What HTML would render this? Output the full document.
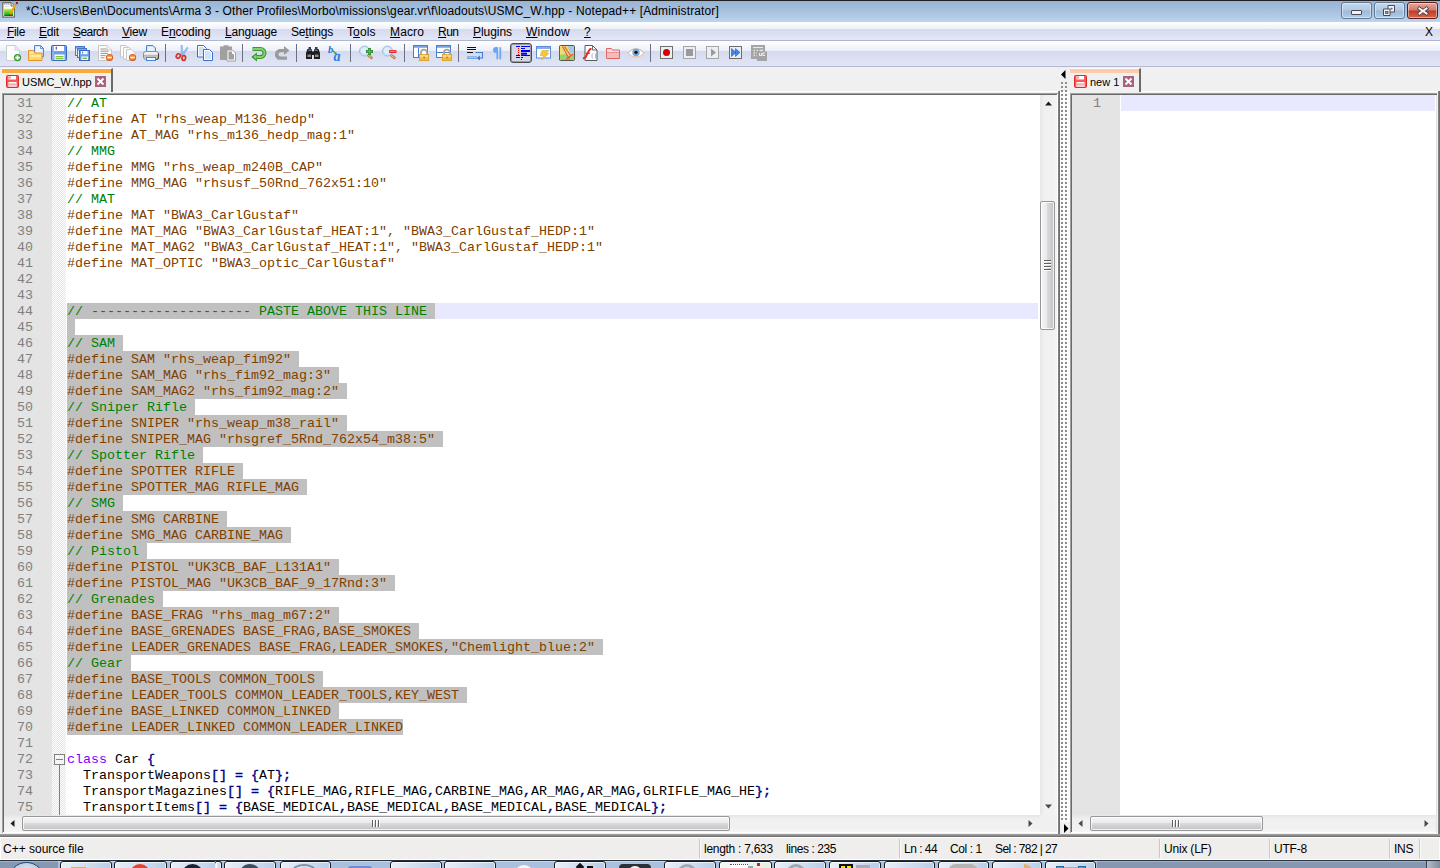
<!DOCTYPE html>
<html lang="en">
<head>
<meta charset="utf-8">
<title>Notepad++</title>
<style>
html,body{margin:0;padding:0;}
body{width:1440px;height:868px;overflow:hidden;position:relative;background:#f0f0f0;font-family:"Liberation Sans",sans-serif;font-size:12px;color:#000;}
div,span,i,b,u{box-sizing:border-box;}
.abs{position:absolute;}
/* ---------- title bar ---------- */
#topline{left:0;top:0;width:1440px;height:1px;background:#1f1f1f;}
#title{left:0;top:1px;width:1440px;height:21px;background:linear-gradient(#98b3d5 0%,#a6c0de 45%,#bed4ed 100%);}
#title .txt{left:26px;top:2px;font-size:12px;line-height:16px;white-space:nowrap;letter-spacing:.116px;}
.cap{top:1px;width:31px;height:17px;border:1px solid #5f7894;border-radius:3px;background:linear-gradient(#c4d6ea 0%,#b3cae4 48%,#9dbad9 52%,#b2cbe6 100%);box-shadow:inset 0 0 0 1px rgba(255,255,255,.45);}
#cclose{border-color:#5a1d1c;background:linear-gradient(#e4a79b 0%,#d4786a 48%,#c03a22 52%,#d1694d 100%);}
/* ---------- menu ---------- */
#menu{left:0;top:22px;width:1440px;height:19px;background:linear-gradient(#ffffff 0%,#eef1fa 38%,#d6daee 39%,#e3e8f6 100%);border-bottom:1px solid #b2b6ce;}
#menu span{position:absolute;top:2px;font-size:12px;line-height:16px;white-space:nowrap;}
#menu u{text-decoration:underline;}
/* ---------- toolbar ---------- */
#tool{left:0;top:41px;width:1440px;height:26px;background:linear-gradient(#ffffff 0%,#ebeff9 39%,#d4d9ee 40%,#e1e6f6 100%);border-bottom:1px solid #b6b7d2;}
.sep{position:absolute;top:3px;width:1px;height:18px;background:#6b6f7e;}
.ic{position:absolute;top:4px;width:16px;height:16px;overflow:visible;}
/* ---------- tabs ---------- */
.tab{top:68px;height:24px;background:#f0f0f0;border-right:2px solid #6a6a6a;border-top:1px solid #fbfbfb;}
.tab .bar{position:absolute;left:0;top:0;right:0;height:4px;}
.tab .lbl{position:absolute;top:6px;font-size:11px;line-height:14px;white-space:nowrap;}
/* ---------- status/taskbar ---------- */
.ssep{position:absolute;top:1px;width:2px;height:19px;border-left:1px solid #cdc8c8;background:#f8f6f6;}
.tb{position:absolute;top:0;height:12px;border:1px solid #141a22;border-radius:3px 3px 0 0;background:linear-gradient(90deg,#e9eff8 0%,#d3e0f1 45%,#b9cde8 100%);box-shadow:inset 0 0 0 1px rgba(255,255,255,.7);}
.tb.act{background:linear-gradient(90deg,#f2f8f2 0%,#e4f0e4 100%);}
/* ---------- scrollbars ---------- */
.vsb{width:17px;background:linear-gradient(90deg,#e6e6e6 0,#f0f0f0 4px,#f1f1f1 13px,#f6f6f6 100%);}
.hsb{height:17px;background:linear-gradient(#e6e6e6 0,#f0f0f0 4px,#f1f1f1 13px,#f6f6f6 100%);}
.vth{width:15px;border:1px solid #979797;border-radius:2px;background:linear-gradient(90deg,#f6f6f6 0%,#eaeaec 46%,#d8d9dc 50%,#c2c3c8 100%);box-shadow:inset 0 0 0 1px rgba(255,255,255,.75);}
.vth i{position:absolute;left:3px;width:7px;height:2px;background:#606060;border-bottom:1px solid #fff;}
.hth{height:15px;border:1px solid #979797;border-radius:2px;background:linear-gradient(#f6f6f6 0%,#eaeaec 46%,#d8d9dc 50%,#c2c3c8 100%);box-shadow:inset 0 0 0 1px rgba(255,255,255,.75);}
.hth i{position:absolute;top:3px;height:7px;width:2px;background:#606060;border-right:1px solid #fff;}
/* ---------- editors ---------- */
.ed{background:#fff;overflow:hidden;}
.code{position:absolute;left:0;top:0;font-family:"Liberation Mono",monospace;font-size:13.333px;line-height:16px;color:#000;}
.ln{position:relative;height:16px;line-height:18px;padding-left:63px;white-space:pre;}
.ln span,.ln b{position:relative;}
.ln .n{position:absolute;left:0;top:0;width:29px;text-align:right;color:#808080;}
.cur{position:absolute;left:63px;right:2px;top:0;height:16px;background:#e8e8ff;}
.c{color:#008000;}
.p{color:#804000;}
.k{color:#8000ff;}
.code b{color:#000080;font-weight:normal;-webkit-text-stroke:.4px #000080;}
.s{position:absolute;left:63px;top:0;height:16px;background:#c0c0c0;}
</style>
</head>
<body>
<div id="topline" class="abs"></div>
<div id="title" class="abs">
  <div class="abs txt">*C:\Users\Ben\Documents\Arma 3 - Other Profiles\Morbo\missions\gear.vr\f\loadouts\USMC_W.hpp - Notepad++ [Administrator]</div>
  <svg class="abs" style="left:2px;top:0px" width="18" height="18" viewBox="0 0 18 18"><linearGradient id="gr" x1="0" y1="0" x2="0" y2="1"><stop offset="0" stop-color="#e4ec58"/><stop offset=".5" stop-color="#58cc2a"/><stop offset=".82" stop-color="#28a81a"/><stop offset=".84" stop-color="#0a560a"/><stop offset="1" stop-color="#0a560a"/></linearGradient><path d="M.8 1.600h8.200l3.400 3.400v11.200h-11.600z" fill="#fff" stroke="#6c6c6c" stroke-width="1.200"/><path d="M9 1.600v3.400h3.400" fill="#ececec" stroke="#6c6c6c"/><path d="M2.300 3.200h5.500" stroke="#7a7a7a" stroke-width="1.200" stroke-dasharray="1 1"/><path d="M2.500 5.600h5" stroke="#c4d2e2" stroke-width=".8"/><rect x="2.200" y="7.600" width="8.800" height="7.300" fill="url(#gr)"/><path d="M7.800 13.300l5.700-9.300" stroke="#f5a800" stroke-width="2.200"/><path d="M7 14.400l.4-2l1.600 .9z" fill="#5a4a30"/><path d="M13.600 3.900l.8-1.300" stroke="#7890b0" stroke-width="1.200"/><rect x="14" y="1" width="2" height="1.800" fill="#b00008"/></svg>
  <div id="cmin" class="abs cap" style="left:1341px"><i class="abs" style="left:9px;top:7px;width:11px;height:5px;background:#f2f2f4;border:1px solid #474a5c;border-radius:1px"></i></div>
  <div id="crest" class="abs cap" style="left:1374px"><svg class="abs" style="left:8px;top:2px" width="13" height="12" viewBox="0 0 13 12"><path d="M5 .5h6.500v6.500h-6.500z" fill="#f4f4f6" stroke="#474a5c"/><rect x="7.500" y="2.800" width="2" height="1.700" fill="#5a6478"/><path d="M.5 4h6.500v6.500h-6.500z" fill="#f4f4f6" stroke="#474a5c"/><rect x="2.600" y="6.400" width="2.400" height="2" fill="#8aa2c4" stroke="#474a5c" stroke-width=".8"/></svg></div>
  <div id="cclose" class="abs cap" style="left:1407px"><svg class="abs" style="left:8px;top:2px" width="14" height="12" viewBox="0 0 14 12"><path d="M3.500 3.500l7 5M10.500 3.500l-7 5" stroke="#4a3a44" stroke-width="3.600" stroke-linecap="square"/><path d="M3.500 3.500l7 5M10.500 3.500l-7 5" stroke="#f6f6f6" stroke-width="2" stroke-linecap="square"/></svg></div>
</div>
<div id="menu" class="abs">
  <span style="left:7px;letter-spacing:-.34px"><u>F</u>ile</span>
  <span style="left:39px;letter-spacing:-.17px"><u>E</u>dit</span>
  <span style="left:73px;letter-spacing:-.58px"><u>S</u>earch</span>
  <span style="left:122px;letter-spacing:-.20px"><u>V</u>iew</span>
  <span style="left:161px;letter-spacing:-.07px">E<u>n</u>coding</span>
  <span style="left:225px;letter-spacing:-.17px"><u>L</u>anguage</span>
  <span style="left:291px;letter-spacing:-.17px">Se<u>t</u>tings</span>
  <span style="left:347px;letter-spacing:.10px">T<u>o</u>ols</span>
  <span style="left:390px;letter-spacing:.13px"><u>M</u>acro</span>
  <span style="left:438px;letter-spacing:-.50px"><u>R</u>un</span>
  <span style="left:473px;letter-spacing:-.05px"><u>P</u>lugins</span>
  <span style="left:526px;letter-spacing:.20px"><u>W</u>indow</span>
  <span style="left:584px"><u>?</u></span>
  <span style="left:1425px">X</span>
</div>
<div id="tool" class="abs">
<!-- toolbar icons: group 1 (file) -->
<svg class="ic" style="left:5px" viewBox="0 0 16 16"><path d="M1.5 .5h8.3l4.7 4.7v10.3h-13z" fill="#fdfdfd" stroke="#cdcdcd"/><path d="M9.8 .5v4.7h4.7z" fill="#ececec" stroke="#d4d4d4" stroke-width=".8"/><circle cx="12.5" cy="12.6" r="3.6" fill="#2f8f22"/><circle cx="12.5" cy="12.6" r="2.9" fill="#4cae3c"/><path d="M12.5 10.4v4.4M10.3 12.6h4.4" stroke="#fff" stroke-width="1.7"/></svg>
<svg class="ic" style="left:28px" viewBox="0 0 16 16"><path d="M6.5 .5h6l3 3v8.3h-9z" fill="#d6e6fb" stroke="#4a86d8"/><path d="M8 2h4l2 2v6.5h-6z" fill="#eef5ff"/><path d="M12.5 .5v3h3" fill="none" stroke="#4a86d8" stroke-width=".8"/><path d="M.5 5.500h5.300l1 2.500h7.200v7.500h-13.500z" fill="#fbd662" stroke="#e8922a"/><path d="M1.500 6.500h3.800l.8 2h-4.600z" fill="#fdecb4"/><path d="M1.500 10h11.500v2.200h-11.500z" fill="#fde9a4"/></svg>
<svg class="ic" style="left:51px" viewBox="0 0 16 16"><rect x=".5" y=".5" width="15" height="15" rx="1" fill="#6f9fe8" stroke="#3868bf"/><rect x="1.500" y="1" width="1" height="14" fill="#a9c6f3"/><rect x="3" y="1" width="10" height="5" fill="#fff"/><rect x="4.700" y="1.700" width="1.200" height="3" fill="#3868bf"/><rect x="3.500" y="9.500" width="10" height="5.500" fill="#fff"/><rect x="4.500" y="11" width="8" height="1.300" fill="#7cc242"/><rect x="4.500" y="13" width="8" height="1.300" fill="#7cc242"/></svg>
<svg class="ic" style="left:74px" viewBox="0 0 16 16"><rect x="1.500" y="1.500" width="9" height="9" fill="#e8f0fc" stroke="#4a78c8"/><rect x="2" y="2" width="8" height="1.500" fill="#7aa5ea"/><rect x="3.500" y="3.500" width="9" height="9" fill="#e8f0fc" stroke="#4a78c8"/><rect x="4" y="4" width="8" height="1.500" fill="#7aa5ea"/><rect x="5.500" y="5.500" width="10" height="10" fill="#6f9fe8" stroke="#3868bf"/><rect x="7" y="6" width="6.500" height="3.200" fill="#fff"/><rect x="8.200" y="6.500" width="1" height="2" fill="#3868bf"/><rect x="7.500" y="11.500" width="6.500" height="3.500" fill="#fff"/><rect x="8.500" y="12.500" width="4.500" height="1.500" fill="#7cc242"/></svg>
<svg class="ic" style="left:97px" viewBox="0 0 16 16"><path d="M1.500 .5h8.500l4.500 4.500v10.500h-13z" fill="#fdfdfd" stroke="#c6c6c6"/><path d="M10 .5v4.500h4.500" fill="#f0f0f0" stroke="#c6c6c6" stroke-width=".8"/><path d="M3.500 4h6M3.500 6.200h8M3.500 8.400h7.500M3.500 10.600h5M3.500 12.800h4" stroke="#8a8a8a" stroke-width=".9"/><circle cx="12.500" cy="12.500" r="3.600" fill="#d85a10"/><circle cx="12.500" cy="12.300" r="2.800" fill="#f08030"/><rect x="10.300" y="11.700" width="4.400" height="1.600" fill="#fff"/></svg>
<svg class="ic" style="left:120px" viewBox="0 0 16 16"><path d="M.5 .5h5.500l2 2v9.500h-7.500z" fill="#fdfdfd" stroke="#c8c8c8"/><path d="M3.500 2.500h5.500l2 2v9.500h-7.500z" fill="#fdfdfd" stroke="#c8c8c8"/><path d="M6.500 4.500h5l3.500 3.500v7.500h-8.500z" fill="#fdfdfd" stroke="#c8c8c8"/><circle cx="12.500" cy="12.500" r="3.600" fill="#d85a10"/><circle cx="12.500" cy="12.300" r="2.800" fill="#f08030"/><rect x="10.300" y="11.700" width="4.400" height="1.600" fill="#fff"/></svg>
<svg class="ic" style="left:143px" viewBox="0 0 16 16"><linearGradient id="pg" x1="0" y1="0" x2="0" y2="1"><stop offset="0" stop-color="#fafafa"/><stop offset=".4" stop-color="#e6e6e6"/><stop offset=".5" stop-color="#b8b8b8"/><stop offset=".75" stop-color="#c8c8c8"/><stop offset="1" stop-color="#f0f0f0"/></linearGradient><path d="M3.500 .5h6.500l2.500 2.500v4.500h-9z" fill="#d4e5fb" stroke="#4a86d8"/><path d="M5 2h4.500l1.500 1.500v3.500h-6z" fill="#eaf2fd"/><rect x=".5" y="6.500" width="15" height="7.800" rx="2.200" fill="url(#pg)" stroke="#8c8c8c"/><path d="M15.500 8.500v4a1.800 1.800 0 0 1 -1.800 1.800h-2" fill="none" stroke="#3c3c3c" stroke-width="1.100"/><rect x="3.500" y="12.500" width="9" height="3" fill="#f4f9ff" stroke="#4a86d8"/></svg>
<i class="sep" style="left:165px"></i>
<!-- group 2 (edit) -->
<svg class="ic" style="left:174px" viewBox="0 0 16 16"><path d="M7 .3l1.200 0l.7 10l-1.500 .4z" fill="#a9cdf0" stroke="#5a9ad8" stroke-width=".5"/><path d="M13.200 2.200l.9 .8l-5.300 8l-1.300-1z" fill="#a9cdf0" stroke="#4f8fd0" stroke-width=".5"/><ellipse cx="4.300" cy="11" rx="1.900" ry="2.300" transform="rotate(35 4.300 11)" fill="none" stroke="#d2322a" stroke-width="1.700"/><ellipse cx="9.800" cy="13" rx="1.800" ry="2.400" transform="rotate(10 9.800 13)" fill="none" stroke="#d2322a" stroke-width="1.700"/></svg>
<svg class="ic" style="left:197px" viewBox="0 0 16 16"><path d="M.5 .5h6l3 3v8.500h-9z" fill="#fff" stroke="#3a6ecb"/><path d="M2 2h4l2 2v6.500h-6z" fill="#cfe0f8"/><path d="M6.500 4.500h6l3 3v8h-9z" fill="#fff" stroke="#3a6ecb"/><path d="M8 6h4l2 2v6h-6z" fill="#cfe0f8"/></svg>
<svg class="ic" style="left:220px" viewBox="0 0 16 16"><path d="M0 1.500h3.500v-1.300h5v1.300h3.500v13.500h-12z" fill="#a0a0a0"/><path d="M7 5h5.500l3 3v8h-8.500z" fill="#fff" stroke="#a0a0a0"/><path d="M8.500 6.500h3.500v2.500h2v5.500h-5.500z" fill="#a0a0a0"/></svg>
<i class="sep" style="left:242px"></i>
<!-- group 3 (undo/redo) -->
<svg class="ic" style="left:251px" viewBox="0 0 16 16"><path d="M1.500 4h8a4 4 0 0 1 0 8h-4" fill="none" stroke="#3a9630" stroke-width="4"/><path d="M.3 12l5.700-4.500v9z" fill="#3a9630"/><path d="M2 4h7.500a4 4 0 0 1 0 8h-4" fill="none" stroke="#86d074" stroke-width="1.800"/><path d="M2.300 12l3-2.400v4.800z" fill="#86d074"/></svg>
<svg class="ic" style="left:274px" viewBox="0 0 16 16"><path d="M10 1l5.500 4.500l-5.500 4.500v-2.800h-3.200c-1.500 0-2.300 .9-2.300 2.100c0 1.200 .9 2.100 2.300 2.100h6.200v3.400h-6.800c-3.200 0-5.200-2.300-5.200-5.400c0-3.100 2.100-5.500 5.300-5.500h3.700z" fill="#9b9b9b"/></svg>
<i class="sep" style="left:296px"></i>
<!-- group 4 (find/replace) -->
<svg class="ic" style="left:305px" viewBox="0 0 16 16"><path d="M3.500 2h2.500v2h-2.500zM10 2h2.500v2h-2.500z" fill="#3a3a3a"/><path d="M2.500 4h4l.8 2.500h1.400l.8-2.500h4l1.500 4v6h-6v-4h-2v4h-6v-6z" fill="#1c1c1c"/><path d="M3 6l1-1.500h2l.5 1.500zM9.500 6l.5-1.500h2l1 1.500z" fill="#5d7aa0"/><rect x="2.500" y="9.500" width="3.500" height="2.500" fill="#8a8a8a"/><rect x="10" y="9.500" width="3.500" height="2.500" fill="#8a8a8a"/></svg>
<svg class="ic" style="left:328px" viewBox="0 0 16 16"><text x="0" y="7.500" font-family="Liberation Serif,serif" font-style="italic" font-weight="bold" font-size="10.500" fill="#2a72e0">b</text><path d="M4.500 5.500l3.500 3" stroke="#3aa048" stroke-width="1.300"/><path d="M9.300 9.800l-3.300-.6l2.100-2.300z" fill="#3aa048"/><text x="5.500" y="15.500" font-family="Liberation Serif,serif" font-style="italic" font-weight="bold" font-size="14" fill="#2a7ae6">a</text></svg>
<i class="sep" style="left:350px"></i>
<!-- group 5 (zoom) -->
<svg class="ic" style="left:359px" viewBox="0 0 16 16"><path d="M9 10l3.300 2.800" stroke="#b07a3e" stroke-width="2.800" stroke-linecap="round"/><path d="M9.500 10.400l2.600 2.200" stroke="#e8bc84" stroke-width="1.100" stroke-linecap="round"/><circle cx="5.500" cy="6" r="5" fill="#cfe0f6" stroke="#9dbde8"/><circle cx="5.200" cy="5.700" r="3.200" fill="#e2edfb"/><path d="M10.500 3v7M7 6.500h7" stroke="#2b8a2e" stroke-width="2.800"/><path d="M10.500 3.700v5.600M7.700 6.500h5.600" stroke="#58b558" stroke-width="1.300"/></svg>
<svg class="ic" style="left:382px" viewBox="0 0 16 16"><path d="M9 10l3.300 2.800" stroke="#b07a3e" stroke-width="2.800" stroke-linecap="round"/><path d="M9.500 10.400l2.600 2.200" stroke="#e8bc84" stroke-width="1.100" stroke-linecap="round"/><circle cx="5.500" cy="6" r="5" fill="#cfe0f6" stroke="#9dbde8"/><circle cx="5.200" cy="5.700" r="3.200" fill="#e2edfb"/><rect x="7" y="5" width="7.500" height="3" rx=".6" fill="#e0282e"/><rect x="7.800" y="5.800" width="5.900" height="1.100" fill="#f78c8c"/></svg>
<i class="sep" style="left:404px"></i>
<!-- group 6 (sync scroll) -->
<svg class="ic" style="left:413px" viewBox="0 0 16 16"><rect x=".5" y=".5" width="14" height="12" fill="#fff" stroke="#4a7ccc"/><rect x="1" y="1" width="13" height="1.800" fill="#7aa6e6"/><path d="M5.500 2.800v9.500" stroke="#4a7ccc"/><path d="M8 10v-2.300a3 3 0 0 1 6 0v2.300" fill="none" stroke="#a4a4a4" stroke-width="1.800"/><rect x="6.300" y="9.500" width="9.400" height="6.200" fill="#f2bc3e" stroke="#d89a20" stroke-width=".7"/><rect x="7" y="10.200" width="8" height="2" fill="#fbdc84"/><rect x="10.500" y="11.500" width="1.200" height="2" fill="#b07a10"/></svg>
<svg class="ic" style="left:436px" viewBox="0 0 16 16"><rect x=".5" y=".5" width="14" height="12" fill="#fff" stroke="#4a7ccc"/><rect x="1" y="1" width="13" height="1.800" fill="#7aa6e6"/><path d="M.5 7.500h14" stroke="#4a7ccc"/><path d="M8 10v-2.300a3 3 0 0 1 6 0v2.300" fill="none" stroke="#a4a4a4" stroke-width="1.800"/><rect x="6.300" y="9.500" width="9.400" height="6.200" fill="#f2bc3e" stroke="#d89a20" stroke-width=".7"/><rect x="7" y="10.200" width="8" height="2" fill="#fbdc84"/><rect x="10.500" y="11.500" width="1.200" height="2" fill="#b07a10"/></svg>
<i class="sep" style="left:458px"></i>
<!-- group 7 (view) -->
<svg class="ic" style="left:467px" viewBox="0 0 16 16"><path d="M0 2.500h9M0 4.500h9M0 7.500h6" stroke="#111" stroke-width="1.100"/><path d="M8.500 7.500h7v5.500h-3" fill="none" stroke="#3f7fd6" stroke-width="1.100"/><path d="M9.800 13l3-2.500v5z" fill="#3568c4"/><rect x="0" y="11.300" width="10" height="2.700" fill="#74a5e6"/><rect x="0" y="12" width="10" height="1" fill="#9cc0f0"/></svg>
<svg class="ic" style="left:490px" viewBox="0 0 16 16"><path d="M7.300 2.200v12M10.300 2.200v12" stroke="#6aa6f2" stroke-width="1.700"/><path d="M11.200 2h-5.200a3 3 0 0 0 0 6h1.500v-6z" fill="#6aa6f2"/></svg>
<i class="abs" style="left:510px;top:2px;width:22px;height:20px;border:1px solid #4a4a4a;border-radius:3px;background:#d3d7e6;box-shadow:inset 0 0 0 1px #9b9da6"></i>
<svg class="ic" style="left:513px" viewBox="0 0 16 16"><path d="M3 1.500h4M8 1.500h9M8 3.500h4M8 10.500h9M3 10.500h4M3 12.500h4M8 12.500h2M8 14.500h1" stroke="#0000f0" stroke-width="1.100"/><path d="M8 6h9M8 8.800h6" stroke="#0000f0" stroke-width="1.900"/><path d="M5.500 3v7" stroke="#f00000" stroke-width="1.100" stroke-dasharray="1.100 .9"/></svg>
<svg class="ic" style="left:536px" viewBox="0 0 16 16"><rect x=".5" y="1.500" width="14" height="11.500" fill="#fff" stroke="#5a8cd8"/><rect x="1" y="2" width="13" height="2" fill="#86b0ec"/><path d="M6 5.500h7l-2.500 3h2.500l-7.500 6.500l2.200-4.500h-3.700z" fill="#f2c742" stroke="#d8a428" stroke-width=".5"/></svg>
<svg class="ic" style="left:559px" viewBox="0 0 16 16"><rect x=".5" y=".5" width="15" height="15" rx="1" fill="#e8e070" stroke="#56564a"/><path d="M9 1h6v6.500l-4 1z" fill="#9fc8f2"/><path d="M1 10l5-1l4 2l5-3v7h-14z" fill="#94d46c"/><path d="M3.500 1.500l7 13M5.500 1.500l6 9M14 9l-7 5.500" stroke="#f0503c" stroke-width="1.100" fill="none"/><path d="M.5 1v14" stroke="#5a5a90" stroke-width="1"/></svg>
<svg class="ic" style="left:582px" viewBox="0 0 16 16"><path d="M3 .5h7.500l4.500 4.500v10.500h-12z" fill="#fff" stroke="#5c5c5c"/><path d="M10.500 .5v4.500h4.500" fill="none" stroke="#5c5c5c" stroke-width=".9"/><path d="M1 13.500l2.500-1l3.500-7c.6-1.300 1.400-1.700 2.500-1.500" fill="none" stroke="#e82a2a" stroke-width="1.900"/><path d="M3.500 8.200h4.500" stroke="#e82a2a" stroke-width="1.200"/><path d="M10.700 8.500c-1 1.500-1 3.500 0 5M13 8.500c1 1.500 1 3.500 0 5" fill="none" stroke="#9ab0c4" stroke-width="1"/></svg>
<svg class="ic" style="left:605px" viewBox="0 0 16 16"><path d="M1.500 3.500h5l1 1.500h7v8.500h-13z" fill="#f8d8d8" stroke="#e06666"/><path d="M2 7h12v6h-12z" fill="#f3bcbc"/><path d="M2 7.500h12" stroke="#e88a8a" stroke-width=".8"/></svg>
<svg class="ic" style="left:628px" viewBox="0 0 16 16"><path d="M.3 8c3-5.500 12.400-5.500 15.400 0c-3 5.300-12.400 5.300-15.400 0z" fill="#fdfdfd" stroke="#e8b890" stroke-width="1"/><path d="M.3 8c3-5.500 12.400-5.500 15.400 0" fill="none" stroke="#c4c4c4" stroke-width="1"/><circle cx="8" cy="7.500" r="3.700" fill="#78a6dc"/><circle cx="8" cy="7.300" r="1.600" fill="#101010"/></svg>
<i class="sep" style="left:650px"></i>
<!-- group 8 (macro) -->
<svg class="ic" style="left:659px" viewBox="0 0 16 16"><rect x="1.500" y="1.500" width="12" height="12" fill="#eceef6" stroke="#6e6e6e"/><circle cx="7.500" cy="7.500" r="3.500" fill="#cc0000"/></svg>
<svg class="ic" style="left:682px" viewBox="0 0 16 16"><rect x="1.500" y="1.500" width="12" height="12" fill="#eceef6" stroke="#a6a6a6"/><rect x="4" y="4" width="7" height="7" fill="#9a9a9a"/></svg>
<svg class="ic" style="left:705px" viewBox="0 0 16 16"><rect x="1.500" y="1.500" width="12" height="12" fill="#eceef6" stroke="#a6a6a6"/><path d="M6 3.500l5 4l-5 4z" fill="#9a9a9a"/></svg>
<svg class="ic" style="left:728px" viewBox="0 0 16 16"><rect x="1.500" y="1.500" width="12" height="12" fill="#eceef6" stroke="#6e6e6e"/><path d="M3.500 3.500l4.500 4l-4.500 4zM7.500 3.500l4.500 4l-4.500 4z" fill="#3f86ea" stroke="#1f5cc4" stroke-width=".6"/></svg>
<svg class="ic" style="left:751px" viewBox="0 0 16 16"><rect x="0" y="0" width="14" height="14" fill="#a4a4a4"/><path d="M2 2.500h10" stroke="#e8e8e8" stroke-width="1.200"/><path d="M2.500 5.500h1.500M5.500 5.500h1.500M2.500 8h1.500M5.500 8h1.500M2.500 10.500h1.500M5.500 10.500h1.500M8.500 5.500h3.500" stroke="#e8e8e8" stroke-width="1.300"/><rect x="6" y="6.500" width="10" height="9.500" fill="#a4a4a4"/><path d="M8.500 8v2.500h2v-2.500M14 8h-2.200v2.500h2.200" fill="none" stroke="#f0f0f0" stroke-width="1"/></svg>

</div>

<!-- tab bar -->
<div class="abs" style="left:113px;top:91px;width:945px;height:1px;background:#fff"></div>
<div class="abs" style="left:1141px;top:91px;width:297px;height:1px;background:#fff"></div>
<div class="abs tab" style="left:2px;width:111px">
  <div class="bar" style="background:#faa93c"></div>
  <svg class="abs" style="left:4px;top:6px" width="13" height="13" viewBox="0 0 13 13"><rect x=".5" y=".5" width="12" height="12" rx="1" fill="#f25c5c" stroke="#e02a2a"/><rect x="2.500" y="1" width="7.500" height="3.500" fill="#fff"/><rect x="3.500" y="1.500" width="1" height="2" fill="#e02a2a"/><rect x="2.500" y="7" width="8" height="5" fill="#fff"/><rect x="3" y="8.500" width="7" height="1.200" fill="#f58a8a"/><rect x="3" y="10.500" width="7" height="1" fill="#f7a0a0"/></svg>
  <span class="lbl" style="left:20px">USMC_W.hpp</span>
  <svg class="abs" style="left:93px;top:7px" width="11" height="11" viewBox="0 0 11 11"><rect width="11" height="11" fill="#a8627f"/><path d="M2.500 2.500l6 6M8.500 2.500l-6 6" stroke="#fff" stroke-width="1.900"/></svg>
</div>
<div class="abs tab" style="left:1070px;width:71px">
  <div class="bar" style="background:#fdcaac"></div>
  <svg class="abs" style="left:4px;top:6px" width="13" height="13" viewBox="0 0 13 13"><rect x=".5" y=".5" width="12" height="12" rx="1" fill="#f25c5c" stroke="#e02a2a"/><rect x="2.500" y="1" width="7.500" height="3.500" fill="#fff"/><rect x="3.500" y="1.500" width="1" height="2" fill="#e02a2a"/><rect x="2.500" y="7" width="8" height="5" fill="#fff"/><rect x="3" y="8.500" width="7" height="1.200" fill="#f58a8a"/><rect x="3" y="10.500" width="7" height="1" fill="#f7a0a0"/></svg>
  <span class="lbl" style="left:20px">new 1</span>
  <svg class="abs" style="left:53px;top:7px" width="11" height="11" viewBox="0 0 11 11"><rect width="11" height="11" fill="#a8627f"/><path d="M2.500 2.500l6 6M8.500 2.500l-6 6" stroke="#fff" stroke-width="1.900"/></svg>
</div>

<!-- left editor frame -->
<div class="abs" style="left:2px;top:93px;width:1056px;height:740px;background:#fff;border-left:1px solid #a0a0a0;border-top:1px solid #a0a0a0"></div>
<div class="abs" style="left:3px;top:94px;width:1054px;height:738px;background:#f0f0f0;border-left:1px solid #696969;border-top:1px solid #696969"></div>
<div class="abs ed" id="ed1" style="left:4px;top:95px;width:1036px;height:720px">
  <div class="abs" style="left:0;top:0;width:48px;height:720px;background:#e4e4e4"></div>
  <div class="abs" style="left:48px;top:0;width:14px;height:720px;background:repeating-conic-gradient(#ffffff 0 25%,#e4e4e4 0 50%) 0 0/2px 2px"></div>
  <div class="abs" style="left:55px;top:670px;width:1px;height:50px;background:#808080"></div>
  <div class="abs" style="left:50px;top:659px;width:11px;height:11px;background:#f5f5f5;border:1px solid #808080"></div>
  <div class="abs" style="left:52px;top:664px;width:7px;height:1px;background:#808080"></div>
  <div class="code" style="width:1036px">
<div class="ln"><span class="n">31</span><span class="c">// AT</span></div>
<div class="ln"><span class="n">32</span><span class="p">#define AT "rhs_weap_M136_hedp"</span></div>
<div class="ln"><span class="n">33</span><span class="p">#define AT_MAG "rhs_m136_hedp_mag:1"</span></div>
<div class="ln"><span class="n">34</span><span class="c">// MMG</span></div>
<div class="ln"><span class="n">35</span><span class="p">#define MMG "rhs_weap_m240B_CAP"</span></div>
<div class="ln"><span class="n">36</span><span class="p">#define MMG_MAG "rhsusf_50Rnd_762x51:10"</span></div>
<div class="ln"><span class="n">37</span><span class="c">// MAT</span></div>
<div class="ln"><span class="n">38</span><span class="p">#define MAT "BWA3_CarlGustaf"</span></div>
<div class="ln"><span class="n">39</span><span class="p">#define MAT_MAG "BWA3_CarlGustaf_HEAT:1", "BWA3_CarlGustaf_HEDP:1"</span></div>
<div class="ln"><span class="n">40</span><span class="p">#define MAT_MAG2 "BWA3_CarlGustaf_HEAT:1", "BWA3_CarlGustaf_HEDP:1"</span></div>
<div class="ln"><span class="n">41</span><span class="p">#define MAT_OPTIC "BWA3_optic_CarlGustaf"</span></div>
<div class="ln"><span class="n">42</span></div>
<div class="ln"><span class="n">43</span></div>
<div class="ln"><span class="n">44</span><i class="cur"></i><i class="s" style="width:368px"></i><span class="c">// -------------------- PASTE ABOVE THIS LINE</span></div>
<div class="ln"><span class="n">45</span><i class="s" style="width:8px"></i></div>
<div class="ln"><span class="n">46</span><i class="s" style="width:56px"></i><span class="c">// SAM</span></div>
<div class="ln"><span class="n">47</span><i class="s" style="width:232px"></i><span class="p">#define SAM "rhs_weap_fim92"</span></div>
<div class="ln"><span class="n">48</span><i class="s" style="width:272px"></i><span class="p">#define SAM_MAG "rhs_fim92_mag:3"</span></div>
<div class="ln"><span class="n">49</span><i class="s" style="width:280px"></i><span class="p">#define SAM_MAG2 "rhs_fim92_mag:2"</span></div>
<div class="ln"><span class="n">50</span><i class="s" style="width:128px"></i><span class="c">// Sniper Rifle</span></div>
<div class="ln"><span class="n">51</span><i class="s" style="width:280px"></i><span class="p">#define SNIPER "rhs_weap_m38_rail"</span></div>
<div class="ln"><span class="n">52</span><i class="s" style="width:376px"></i><span class="p">#define SNIPER_MAG "rhsgref_5Rnd_762x54_m38:5"</span></div>
<div class="ln"><span class="n">53</span><i class="s" style="width:136px"></i><span class="c">// Spotter Rifle</span></div>
<div class="ln"><span class="n">54</span><i class="s" style="width:176px"></i><span class="p">#define SPOTTER RIFLE</span></div>
<div class="ln"><span class="n">55</span><i class="s" style="width:240px"></i><span class="p">#define SPOTTER_MAG RIFLE_MAG</span></div>
<div class="ln"><span class="n">56</span><i class="s" style="width:56px"></i><span class="c">// SMG</span></div>
<div class="ln"><span class="n">57</span><i class="s" style="width:160px"></i><span class="p">#define SMG CARBINE</span></div>
<div class="ln"><span class="n">58</span><i class="s" style="width:224px"></i><span class="p">#define SMG_MAG CARBINE_MAG</span></div>
<div class="ln"><span class="n">59</span><i class="s" style="width:80px"></i><span class="c">// Pistol</span></div>
<div class="ln"><span class="n">60</span><i class="s" style="width:272px"></i><span class="p">#define PISTOL "UK3CB_BAF_L131A1"</span></div>
<div class="ln"><span class="n">61</span><i class="s" style="width:328px"></i><span class="p">#define PISTOL_MAG "UK3CB_BAF_9_17Rnd:3"</span></div>
<div class="ln"><span class="n">62</span><i class="s" style="width:96px"></i><span class="c">// Grenades</span></div>
<div class="ln"><span class="n">63</span><i class="s" style="width:272px"></i><span class="p">#define BASE_FRAG "rhs_mag_m67:2"</span></div>
<div class="ln"><span class="n">64</span><i class="s" style="width:352px"></i><span class="p">#define BASE_GRENADES BASE_FRAG,BASE_SMOKES</span></div>
<div class="ln"><span class="n">65</span><i class="s" style="width:536px"></i><span class="p">#define LEADER_GRENADES BASE_FRAG,LEADER_SMOKES,"Chemlight_blue:2"</span></div>
<div class="ln"><span class="n">66</span><i class="s" style="width:64px"></i><span class="c">// Gear</span></div>
<div class="ln"><span class="n">67</span><i class="s" style="width:256px"></i><span class="p">#define BASE_TOOLS COMMON_TOOLS</span></div>
<div class="ln"><span class="n">68</span><i class="s" style="width:400px"></i><span class="p">#define LEADER_TOOLS COMMON_LEADER_TOOLS,KEY_WEST</span></div>
<div class="ln"><span class="n">69</span><i class="s" style="width:272px"></i><span class="p">#define BASE_LINKED COMMON_LINKED</span></div>
<div class="ln"><span class="n">70</span><i class="s" style="width:336px"></i><span class="p">#define LEADER_LINKED COMMON_LEADER_LINKED</span></div>
<div class="ln"><span class="n">71</span></div>
<div class="ln"><span class="n">72</span><span class="k">class</span> Car <b>{</b></div>
<div class="ln"><span class="n">73</span>  TransportWeapons<b>[]</b> <b>=</b> <b>{</b>AT<b>};</b></div>
<div class="ln"><span class="n">74</span>  TransportMagazines<b>[]</b> <b>=</b> <b>{</b>RIFLE_MAG<b>,</b>RIFLE_MAG<b>,</b>CARBINE_MAG<b>,</b>AR_MAG<b>,</b>AR_MAG<b>,</b>GLRIFLE_MAG_HE<b>};</b></div>
<div class="ln"><span class="n">75</span>  TransportItems<b>[]</b> <b>=</b> <b>{</b>BASE_MEDICAL<b>,</b>BASE_MEDICAL<b>,</b>BASE_MEDICAL<b>,</b>BASE_MEDICAL<b>};</b></div>
  </div>
</div>
<!-- left vertical scrollbar -->
<div class="abs vsb" style="left:1040px;top:95px;height:720px">
  <svg class="abs" style="left:5px;top:6px" width="7" height="5" viewBox="0 0 7 5"><path d="M0 4.500l3.500-4l3.500 4z" fill="#1c1c1c"/></svg>
  <div class="abs vth" style="left:0;top:106px;height:129px"><i style="top:58px"></i><i style="top:61px"></i><i style="top:64px"></i><i style="top:67px"></i></div>
  <svg class="abs" style="left:5px;top:709px" width="7" height="5" viewBox="0 0 7 5"><path d="M0 .5l3.500 4l3.500-4z" fill="#4a4a4a"/></svg>
</div>
<!-- left horizontal scrollbar -->
<div class="abs hsb" style="left:4px;top:815px;width:1036px">
  <svg class="abs" style="left:6px;top:5px" width="5" height="7" viewBox="0 0 5 7"><path d="M4.500 0l-4 3.500l4 3.500z" fill="#1c1c1c"/></svg>
  <div class="abs hth" style="left:18px;top:1px;width:708px"><i style="left:349px"></i><i style="left:352px"></i><i style="left:355px"></i></div>
  <svg class="abs" style="left:1024px;top:5px" width="5" height="7" viewBox="0 0 5 7"><path d="M.5 0l4 3.500l-4 3.500z" fill="#4a4a4a"/></svg>
</div>
<!-- splitter -->
<div class="abs" style="left:1058px;top:91px;width:2px;height:745px;background:linear-gradient(90deg,#8a8a8a,#666666)"></div>
<div class="abs" style="left:1060px;top:91px;width:10px;height:745px;background:#fbfbfb"></div>
<div class="abs" style="left:1061px;top:82px;width:2px;height:740px;background:repeating-linear-gradient(#8c8c8c 0 2px,transparent 2px 4px)"></div>
<div class="abs" style="left:1065px;top:82px;width:2px;height:740px;background:repeating-linear-gradient(#8c8c8c 0 2px,transparent 2px 4px)"></div>
<div class="abs" style="left:1060px;top:822px;width:10px;height:15px;background:#f0f0f0"></div>
<svg class="abs" style="left:1061px;top:70px" width="5" height="9" viewBox="0 0 5 9"><path d="M4.500 0l-4.500 4.500l4.500 4.500z" fill="#000"/></svg>
<svg class="abs" style="left:1064px;top:824px" width="5" height="9" viewBox="0 0 5 9"><path d="M0 0l4.500 4.500l-4.500 4.500z" fill="#000"/></svg>
<!-- right editor frame -->
<div class="abs" style="left:1070px;top:93px;width:367px;height:740px;background:#fff;border-left:1px solid #a0a0a0;border-top:1px solid #a0a0a0"></div>
<div class="abs" style="left:1071px;top:94px;width:366px;height:738px;background:#f0f0f0;border-left:1px solid #696969;border-top:1px solid #696969"></div>
<div class="abs" style="left:1436px;top:95px;width:1px;height:738px;background:#e3e3e3"></div>
<div class="abs" style="left:1438px;top:91px;width:2px;height:746px;background:linear-gradient(90deg,#8a8a8a,#666666)"></div>
<div class="abs ed" id="ed2" style="left:1072px;top:95px;width:364px;height:720px">
  <div class="abs" style="left:0;top:0;width:48px;height:720px;background:#e4e4e4"></div>
  <div class="abs" style="left:49px;top:0;width:314px;height:16px;background:#e8e8ff"></div>
  <div class="code" style="width:362px"><div class="ln" style="padding-left:49px"><span class="n">1</span></div></div>
</div>
<div class="abs hsb" style="left:1072px;top:815px;width:364px">
  <svg class="abs" style="left:6px;top:5px" width="5" height="7" viewBox="0 0 5 7"><path d="M4.500 0l-4 3.500l4 3.500z" fill="#4a4a4a"/></svg>
  <div class="abs hth" style="left:18px;top:1px;width:173px"><i style="left:81px"></i><i style="left:84px"></i><i style="left:87px"></i></div>
  <svg class="abs" style="left:352px;top:5px" width="5" height="7" viewBox="0 0 5 7"><path d="M.5 0l4 3.500l-4 3.500z" fill="#4a4a4a"/></svg>
</div>
<!-- line above status bar -->
<div class="abs" style="left:0;top:834px;width:1440px;height:3px;background:linear-gradient(#a8a8a8,#6a6a6a)"></div>
<div class="abs" style="left:0;top:837px;width:1440px;height:1px;background:#fff"></div>

<!-- status bar -->
<div class="abs" id="status" style="left:0;top:838px;width:1440px;height:21px;background:#f0eded;font-size:12px;line-height:16px;white-space:nowrap;border-left:1px solid #fff;border-right:1px solid #fff">
  <span class="abs" style="left:2px;top:3px">C++ source file</span>
  <i class="ssep" style="left:698px"></i>
  <span class="abs" style="left:703px;top:3px;letter-spacing:-.28px">length : 7,633</span>
  <span class="abs" style="left:785px;top:3px;letter-spacing:-.42px">lines : 235</span>
  <i class="ssep" style="left:898px"></i>
  <span class="abs" style="left:903px;top:3px;letter-spacing:-.5px">Ln : 44</span>
  <span class="abs" style="left:949px;top:3px;letter-spacing:-.42px">Col : 1</span>
  <span class="abs" style="left:994px;top:3px;letter-spacing:-.6px">Sel : 782 | 27</span>
  <i class="ssep" style="left:1158px"></i>
  <span class="abs" style="left:1163px;top:3px;letter-spacing:-.2px">Unix (LF)</span>
  <i class="ssep" style="left:1268px"></i>
  <span class="abs" style="left:1273px;top:3px;letter-spacing:-.2px">UTF-8</span>
  <i class="ssep" style="left:1388px"></i>
  <span class="abs" style="left:1393px;top:3px;letter-spacing:-.3px">INS</span>
  <i class="ssep" style="left:1418px"></i>
</div>
<div class="abs" style="left:0;top:859px;width:1440px;height:1px;background:#fff"></div>
<!-- taskbar -->
<div class="abs" id="task" style="left:0;top:860px;width:1440px;height:8px;background:#8597b1;border-top:1px solid #27323f;overflow:hidden">
  <div class="abs" style="left:0;top:0;width:1440px;height:1px;background:#a3b4ca"></div>
  <div class="abs" style="left:58px;top:0;width:1039px;height:7px;background:#a9c1df;border-top:1px solid #c6d8ee"></div>
  <div class="abs" style="left:8px;top:1px;width:37px;height:37px;border-radius:50%;border:1px solid #1d4a78;background:radial-gradient(circle at 50% 30%,#e6eef6,#a9bdd2 60%,#6f8fb0)"></div>
  <i class="tb" style="left:60px;width:52px"></i>
  <i class="tb" style="left:114px;width:53px"></i>
  <i class="tb" style="left:170px;width:47px"></i>
  <i class="tb" style="left:216px;width:6px;border-left:none;border-radius:0 3px 0 0"></i>
  <i class="tb" style="left:224px;width:52px"></i>
  <i class="tb" style="left:280px;width:51px"></i>
  <i class="tb" style="left:390px;width:52px"></i>
  <i class="tb" style="left:444px;width:52px"></i>
  <i class="tb" style="left:554px;width:52px"></i>
  <i class="tb" style="left:664px;width:52px"></i>
  <i class="tb act" style="left:719px;width:53px"></i>
  <i class="tb" style="left:774px;width:52px"></i>
  <i class="tb" style="left:829px;width:52px"></i>
  <i class="tb" style="left:884px;width:51px"></i>
  <i class="tb" style="left:938px;width:51px"></i>
  <i class="tb" style="left:992px;width:50px"></i>
  <i class="tb" style="left:1045px;width:51px"></i>
  <i class="abs" style="left:71px;top:6px;width:15px;height:3px;background:#d9b45e"></i>
  <i class="abs" style="left:130px;top:3px;width:20px;height:20px;border-radius:50%;background:#e8432f"></i>
  <i class="abs" style="left:182px;top:3px;width:21px;height:21px;border-radius:50%;background:#1b2233"></i>
  <i class="abs" style="left:239px;top:3px;width:22px;height:22px;border-radius:50%;background:#3d4d5e"></i>
  <i class="abs" style="left:292px;top:3px;width:24px;height:14px;border-radius:50%;border:2px solid #7f95ad;border-bottom:none"></i>
  <i class="abs" style="left:348px;top:5px;width:24px;height:6px;border-radius:3px 3px 0 0;background:#6f8ad8"></i>
  <i class="abs" style="left:514px;top:4px;width:20px;height:20px;border-radius:50%;background:#f4f7fb"></i>
  <i class="abs" style="left:577px;top:3px;width:6px;height:6px;background:#111;transform:rotate(45deg)"></i>
  <i class="abs" style="left:587px;top:5px;width:6px;height:3px;background:#111"></i>
  <i class="abs" style="left:619px;top:3px;width:32px;height:8px;border-radius:4px 4px 0 0;background:#2a3038"></i>
  <i class="abs" style="left:630px;top:5px;width:10px;height:6px;border-radius:50%;background:#f0f0f0"></i>
  <i class="abs" style="left:677px;top:3px;width:20px;height:20px;border-radius:50%;border:3px solid #a2a9b2"></i>
  <i class="abs" style="left:730px;top:3px;width:18px;height:6px;background:#fff;border-top:1px dotted #555"></i>
  <i class="abs" style="left:748px;top:5px;width:5px;height:3px;background:#9aa"></i>
  <i class="abs" style="left:757px;top:2px;width:3px;height:3px;background:#d0202a"></i>
  <i class="abs" style="left:786px;top:3px;width:20px;height:20px;border-radius:50%;border:3px solid #a2a9b2"></i>
  <i class="abs" style="left:839px;top:3px;width:14px;height:6px;background:#f4e800;border:2px solid #111;border-bottom:none"></i>
  <i class="abs" style="left:845px;top:3px;width:2px;height:6px;background:#111"></i>
  <i class="abs" style="left:856px;top:4px;width:14px;height:4px;background:#a9adb4"></i>
  <i class="abs" style="left:948px;top:3px;width:30px;height:12px;border-radius:8px 8px 0 0;background:#b4b4b4"></i>
  <i class="abs" style="left:1024px;top:3px;width:9px;height:9px;border-radius:0 9px 0 0;background:#e8b070"></i>
  <i class="abs" style="left:1056px;top:5px;width:8px;height:4px;background:#4a9ae6;border:1px solid #1f6a9a"></i>
  <i class="abs" style="left:1078px;top:5px;width:8px;height:4px;background:#4a9ae6;border:1px solid #1f6a9a"></i>
  <i class="abs" style="left:1064px;top:6px;width:14px;height:2px;background:#b0b0b0"></i>
  <div class="abs" style="left:1426px;top:0;width:14px;height:8px;background:linear-gradient(90deg,#b4bcc8,#7f8c9e);border-left:1px solid #3a4656"></div>
</div>
</body>
</html>
